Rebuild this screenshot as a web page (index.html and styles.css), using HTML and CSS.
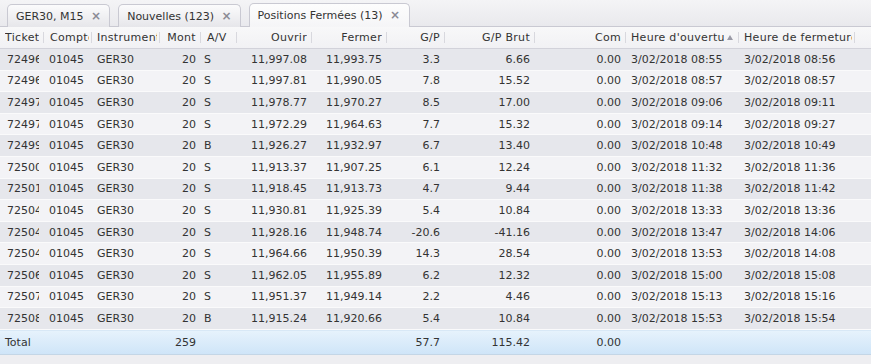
FILE: index.html
```html
<!DOCTYPE html>
<html lang="fr">
<head>
  <meta charset="UTF-8" />
  <title>Positions Fermées</title>
  <link rel="stylesheet" href="styles.css">
</head>
<body>
  <div class="tabs">
    <div class="tab">GER30, M15 <span class="close">&times;</span></div>
    <div class="tab">Nouvelles (123) <span class="close">&times;</span></div>
    <div class="tab active">Positions Fermées (13) <span class="close">&times;</span></div>
  </div>

  <div class="grid">
    <div class="row head">
      <div class="cell"><span>Ticket</span></div>
      <div class="cell"><span>Compte</span></div>
      <div class="cell"><span>Instrument</span></div>
      <div class="cell num"><span>Mont</span></div>
      <div class="cell"><span>A/V</span></div>
      <div class="cell num"><span>Ouvrir</span></div>
      <div class="cell num"><span>Fermer</span></div>
      <div class="cell num"><span>G/P</span></div>
      <div class="cell num"><span>G/P Brut</span></div>
      <div class="cell num"><span>Com</span></div>
      <div class="cell sorted"><span>Heure d'ouverture</span><i class="arrow"></i></div>
      <div class="cell"><span>Heure de fermeture</span></div>
      <div class="cell last"></div>
    </div>
    <div id="rows"></div>
    <div class="row total">
      <div class="cell">Total</div>
      <div class="cell"></div>
      <div class="cell"></div>
      <div class="cell num">259</div>
      <div class="cell"></div>
      <div class="cell"></div>
      <div class="cell"></div>
      <div class="cell num">57.7</div>
      <div class="cell num">115.42</div>
      <div class="cell num">0.00</div>
      <div class="cell"></div>
      <div class="cell"></div>
      <div class="cell"></div>
    </div>
  </div>

  <script>
    const trades = [
      ['724961', 'S', '11,997.08', '11,993.75', '3.3', '6.66', '08:55', '08:56'],
      ['724968', 'S', '11,997.81', '11,990.05', '7.8', '15.52', '08:57', '08:57'],
      ['724973', 'S', '11,978.77', '11,970.27', '8.5', '17.00', '09:06', '09:11'],
      ['724977', 'S', '11,972.29', '11,964.63', '7.7', '15.32', '09:14', '09:27'],
      ['724990', 'B', '11,926.27', '11,932.97', '6.7', '13.40', '10:48', '10:49'],
      ['725002', 'S', '11,913.37', '11,907.25', '6.1', '12.24', '11:32', '11:36'],
      ['725011', 'S', '11,918.45', '11,913.73', '4.7', '9.44', '11:38', '11:42'],
      ['725040', 'S', '11,930.81', '11,925.39', '5.4', '10.84', '13:33', '13:36'],
      ['725043', 'S', '11,928.16', '11,948.74', '-20.6', '-41.16', '13:47', '14:06'],
      ['725045', 'S', '11,964.66', '11,950.39', '14.3', '28.54', '13:53', '14:08'],
      ['725061', 'S', '11,962.05', '11,955.89', '6.2', '12.32', '15:00', '15:08'],
      ['725073', 'S', '11,951.37', '11,949.14', '2.2', '4.46', '15:13', '15:16'],
      ['725088', 'B', '11,915.24', '11,920.66', '5.4', '10.84', '15:53', '15:54']
    ];

    let html = '';
    trades.forEach((t, i) => {
      html += `<div class="row ${i % 2 ? 'even' : 'odd'}">
        <div class="cell ticket">${t[0]}</div>
        <div class="cell">01045</div>
        <div class="cell">GER30</div>
        <div class="cell num">20</div>
        <div class="cell side">${t[1]}</div>
        <div class="cell num">${t[2]}</div>
        <div class="cell num">${t[3]}</div>
        <div class="cell num">${t[4]}</div>
        <div class="cell num">${t[5]}</div>
        <div class="cell num">0.00</div>
        <div class="cell">3/02/2018 ${t[6]}</div>
        <div class="cell">3/02/2018 ${t[7]}</div>
        <div class="cell"></div>
      </div>`;
    });
    document.getElementById('rows').innerHTML = html;
  </script>
</body>
</html>
```

FILE: styles.css
```css
body {
  margin: 0;
  padding: 0;
  background: #eeeef1;
  font-family: "DejaVu Sans", Verdana, sans-serif;
  font-size: 11px;
  color: #333;
}
.tabs {
  display: flex;
  align-items: flex-end;
  gap: 8px;
  height: 26px;
  padding-left: 7px;
  background: linear-gradient(#f4f4f6, #e9e9ed);
  border-bottom: 1px solid #c9c9d2;
}
.tab {
  height: 22px;
  line-height: 22px;
  padding: 0 8px 0 8px;
  margin-bottom: -1px;
  border: 1px solid #c9c9d2;
  border-bottom: none;
  border-radius: 5px 5px 0 0;
  background: linear-gradient(#fbfbfc, #e6e6ea);
  color: #333;
  white-space: nowrap;
}
.tab.active {
  background: linear-gradient(#fdfdfd, #f5f5f7);
  height: 23px;
  padding-right: 9px;
}
.close {
  margin-left: 4px;
  color: #8a8a94;
  font-weight: bold;
  font-size: 12px;
}
.grid {
  background: #eeeef1;
}
.row {
  display: grid;
  grid-template-columns: 44px 48px 68px 41px 36px 75px 75px 58px 90px 91px 113px 116px 16px;
  height: 21.6px;
  box-sizing: border-box;
  border-bottom: 1px solid #fafafb;
}
.cell {
  padding: 0 4px 0 5px;
  overflow: hidden;
  white-space: nowrap;
  display: flex;
  align-items: center;
}
.cell.num {
  justify-content: flex-end;
  padding-right: 5px;
}
.cell.ticket {
  padding-left: 7px;
  clip-path: inset(0 5px 0 0);
}
.cell.side {
  padding-left: 3px;
}
.odd {
  background: #e6e7ec;
}
.even {
  background: #f3f3f6;
}
.head {
  height: 22px;
  background: linear-gradient(#f8f8f9, #f1f1f4);
  border-bottom: 1px solid #d2d2da;
  letter-spacing: 0.3px;
}
.head .cell {
  position: relative;
  padding-right: 3px;
}
.head .cell:nth-child(2),
.head .cell:nth-child(5) {
  padding-left: 6px;
}
.head .cell.num {
  padding-right: 5px;
}
.head .cell span {
  overflow: hidden;
}
.head .cell:not(.last)::after {
  content: "";
  position: absolute;
  right: 0;
  top: 5px;
  bottom: 5px;
  border-right: 1px solid #d8d8de;
}
.head .cell.sorted {
  padding-right: 0;
}
.sorted span {
  flex: 1;
}
.arrow {
  flex: none;
  width: 0;
  height: 0;
  margin: 0 6px 0 3px;
  border-left: 3px solid transparent;
  border-right: 3px solid transparent;
  border-bottom: 5px solid #9a9aa6;
}
.total {
  height: 25px;
  background: linear-gradient(#e6f2fc, #cfe5f8);
  border-top: 1px solid #d8e8f6;
  border-bottom: 1px solid #c4d6e6;
}
```
